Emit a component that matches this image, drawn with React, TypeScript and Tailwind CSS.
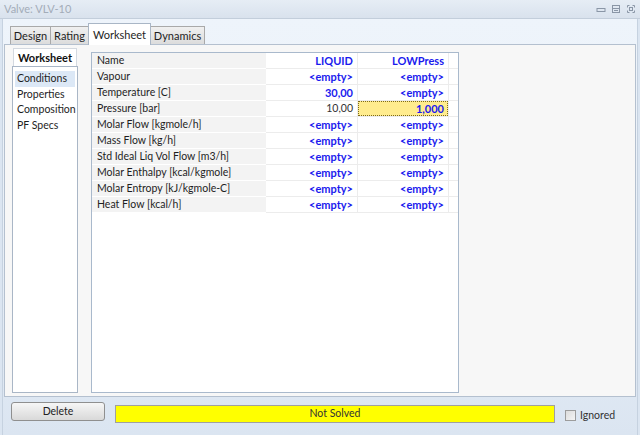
import React from "react";

const ROWS: { label: string; a: string; b: string; aKind?: "plain"; bKind?: "edit" }[] = [
  { label: "Vapour", a: "<empty>", b: "<empty>" },
  { label: "Temperature [C]", a: "30,00", b: "<empty>" },
  { label: "Pressure [bar]", a: "10,00", b: "1,000", aKind: "plain", bKind: "edit" },
  { label: "Molar Flow [kgmole/h]", a: "<empty>", b: "<empty>" },
  { label: "Mass Flow [kg/h]", a: "<empty>", b: "<empty>" },
  { label: "Std Ideal Liq Vol Flow [m3/h]", a: "<empty>", b: "<empty>" },
  { label: "Molar Enthalpy [kcal/kgmole]", a: "<empty>", b: "<empty>" },
  { label: "Molar Entropy [kJ/kgmole-C]", a: "<empty>", b: "<empty>" },
  { label: "Heat Flow [kcal/h]", a: "<empty>", b: "<empty>" },
];

const NAV = ["Conditions", "Properties", "Composition", "PF Specs"];

function TitleButtons() {
  return (
    <div className="flex items-center gap-[5px] pr-[4px]">
      <svg width="10" height="10" viewBox="0 0 10 10">
        <rect x="1" y="4.5" width="8" height="3" fill="none" stroke="#8a96a6" />
      </svg>
      <svg width="10" height="10" viewBox="0 0 10 10">
        <rect x="1.5" y="1.5" width="7" height="7" fill="none" stroke="#8a96a6" />
        <line x1="1.5" y1="4.5" x2="8.5" y2="4.5" stroke="#8a96a6" />
        <line x1="3" y1="6.5" x2="7" y2="6.5" stroke="#8a96a6" />
      </svg>
      <svg width="10" height="10" viewBox="0 0 10 10">
        <path d="M1.5 1.5h2M6.5 1.5h2v2M8.5 6.5v2h-2M3.5 8.5h-2v-2M1.5 3.5v-2" fill="none" stroke="#8a96a6" />
        <rect x="3.5" y="3.5" width="3" height="3" fill="none" stroke="#8a96a6" />
      </svg>
    </div>
  );
}

function Tab({ label, w, active }: { label: string; w: string; active?: boolean }) {
  if (active) {
    return (
      <div className={`${w} h-[22px] pt-[1px] flex items-center justify-center bg-white border border-b-0 border-[#a9b6c6] -mb-px relative z-10 text-[11px] text-[#1e1e1e]`}>
        {label}
      </div>
    );
  }
  return (
    <div className={`${w} h-[18px] pt-[2px] flex items-center justify-center bg-gradient-to-b from-[#f0f0f0] to-[#dcdcdc] border border-b-0 border-[#a9a9a9] text-[11px] text-[#1e1e1e]`}>
      {label}
    </div>
  );
}

function Value({ text, kind }: { text: string; kind?: "plain" | "edit" }) {
  if (kind === "plain") {
    return <span className="text-[#333] text-[10.5px]">{text}</span>;
  }
  return <span className="font-bold text-[11px] text-[#1a1aee]">{text}</span>;
}

export default function App() {
  return (
    <div
      className="w-[640px] h-[435px] flex flex-col bg-[#dbe5f1] overflow-hidden"
      style={{ fontFamily: 'Lato, "Noto Sans", sans-serif' }}
    >
      {/* title bar */}
      <div className="h-[19px] flex items-center justify-between bg-gradient-to-b from-[#e6edf5] to-[#d9e2ed] border-b border-[#c3cedb]">
        <span className="pl-[4px] pt-[1px] text-[11px] text-[#a3acb8]">Valve: VLV-10</span>
        <TitleButtons />
      </div>

      {/* body */}
      <div className="flex-1 flex flex-col mx-[2px] border-l border-r border-[#c6d2e0] bg-gradient-to-b from-[#eef4fb] via-[#e9f0f8] to-[#dbe5f1]">
        {/* tab strip */}
        <div className="h-[25px] shrink-0 flex items-end pl-[7px]">
          <Tab label="Design" w="w-[41px]" />
          <Tab label="Rating" w="w-[39px] -ml-px" />
          <Tab label="Worksheet" w="w-[63px] -ml-px" active />
          <Tab label="Dynamics" w="w-[55px] -ml-px" />
        </div>

        {/* tab page */}
        <div className="h-[353px] shrink-0 mx-px bg-[#f7f7f7] border border-[#b4c0cf] flex pl-[7px] pt-[3px] pb-[3px]">
          {/* left nav */}
          <div className="w-[66px] flex flex-col">
            <div className="h-[18px] mx-px pt-[1px] flex items-center justify-center bg-white border border-b-0 border-[#d4d9e0] text-[11px] font-bold text-[#111]">
              Worksheet
            </div>
            <div className="flex-1 bg-white border border-[#a9b6c6] pt-[4px] px-[2px] flex flex-col">
              {NAV.map((n, i) => (
                <div
                  key={n}
                  className={`h-[15.5px] pt-[1px] flex items-center pl-[2px] text-[10.5px] text-[#1e1e1e] ${i === 0 ? "bg-[#dce8f6]" : ""}`}
                >
                  {n}
                </div>
              ))}
            </div>
          </div>

          {/* grid */}
          <div className="ml-[13px] mt-[4px] w-[368px] bg-white border border-[#a9b9cc] flex flex-col text-[10.5px]">
            <div className="flex h-[16px]">
              <div className="w-[174px] pl-[5px] pt-[1px] flex items-center bg-[#f3f3f3] border-b border-white text-[#1e1e1e]">Name</div>
              <div className="w-[92px] pr-[4px] pt-[1px] flex items-center justify-end border-b border-r border-[#ececec] font-bold text-[11px] text-[#1a1aee]">LIQUID</div>
              <div className="w-[91px] pr-[4px] pt-[1px] flex items-center justify-end border-b border-r border-[#ececec] font-bold text-[11px] text-[#1a1aee]">LOWPress</div>
              <div className="flex-1 border-b border-[#ececec]" />
            </div>
            {ROWS.map((r) => (
              <div key={r.label} className="flex h-[16px]">
                <div className="w-[174px] pl-[5px] pt-[1px] flex items-center bg-[#f3f3f3] border-b border-white text-[#1e1e1e] whitespace-nowrap">
                  {r.label}
                </div>
                <div className="w-[92px] pr-[4px] pt-[1px] flex items-center justify-end border-b border-r border-[#ececec]">
                  <Value text={r.a} kind={r.aKind} />
                </div>
                {r.bKind === "edit" ? (
                  <div className="w-[91px] flex border-b border-r border-[#ececec]">
                    <div className="flex-1 pr-[3px] pt-[1px] flex items-center justify-end bg-[#ffec8e] border border-dotted border-[#7d6a1c]">
                      <Value text={r.b} />
                    </div>
                  </div>
                ) : (
                  <div className="w-[91px] pr-[4px] pt-[1px] flex items-center justify-end border-b border-r border-[#ececec]">
                    <Value text={r.b} />
                  </div>
                )}
                <div className="flex-1 border-b border-[#ececec]" />
              </div>
            ))}
          </div>
          <div className="flex-1" />
        </div>

        {/* bottom bar */}
        <div className="flex items-start pl-[8px] pt-[5px]">
          <button className="w-[94px] h-[19px] rounded-[3px] border border-[#8f8f8f] bg-gradient-to-b from-[#f6f6f6] to-[#d9d9d9] text-[10.5px] text-[#222] flex items-center justify-center">
            Delete
          </button>
          <div className="ml-[10px] w-[440px] h-[18px] mt-[3px] bg-[#ffff00] border border-[#a0a0a0] flex items-center justify-center text-[10.5px] text-[#333]">
            Not Solved
          </div>
          <div className="ml-[10px] mt-[6px] flex items-center gap-[4px]">
            <div className="w-[11px] h-[11px] border border-[#9c9c9c] bg-gradient-to-br from-[#dcdcdc] to-[#f4f4f4]" />
            <span className="text-[10.5px] text-[#333]">Ignored</span>
          </div>
        </div>
      </div>
    </div>
  );
}
